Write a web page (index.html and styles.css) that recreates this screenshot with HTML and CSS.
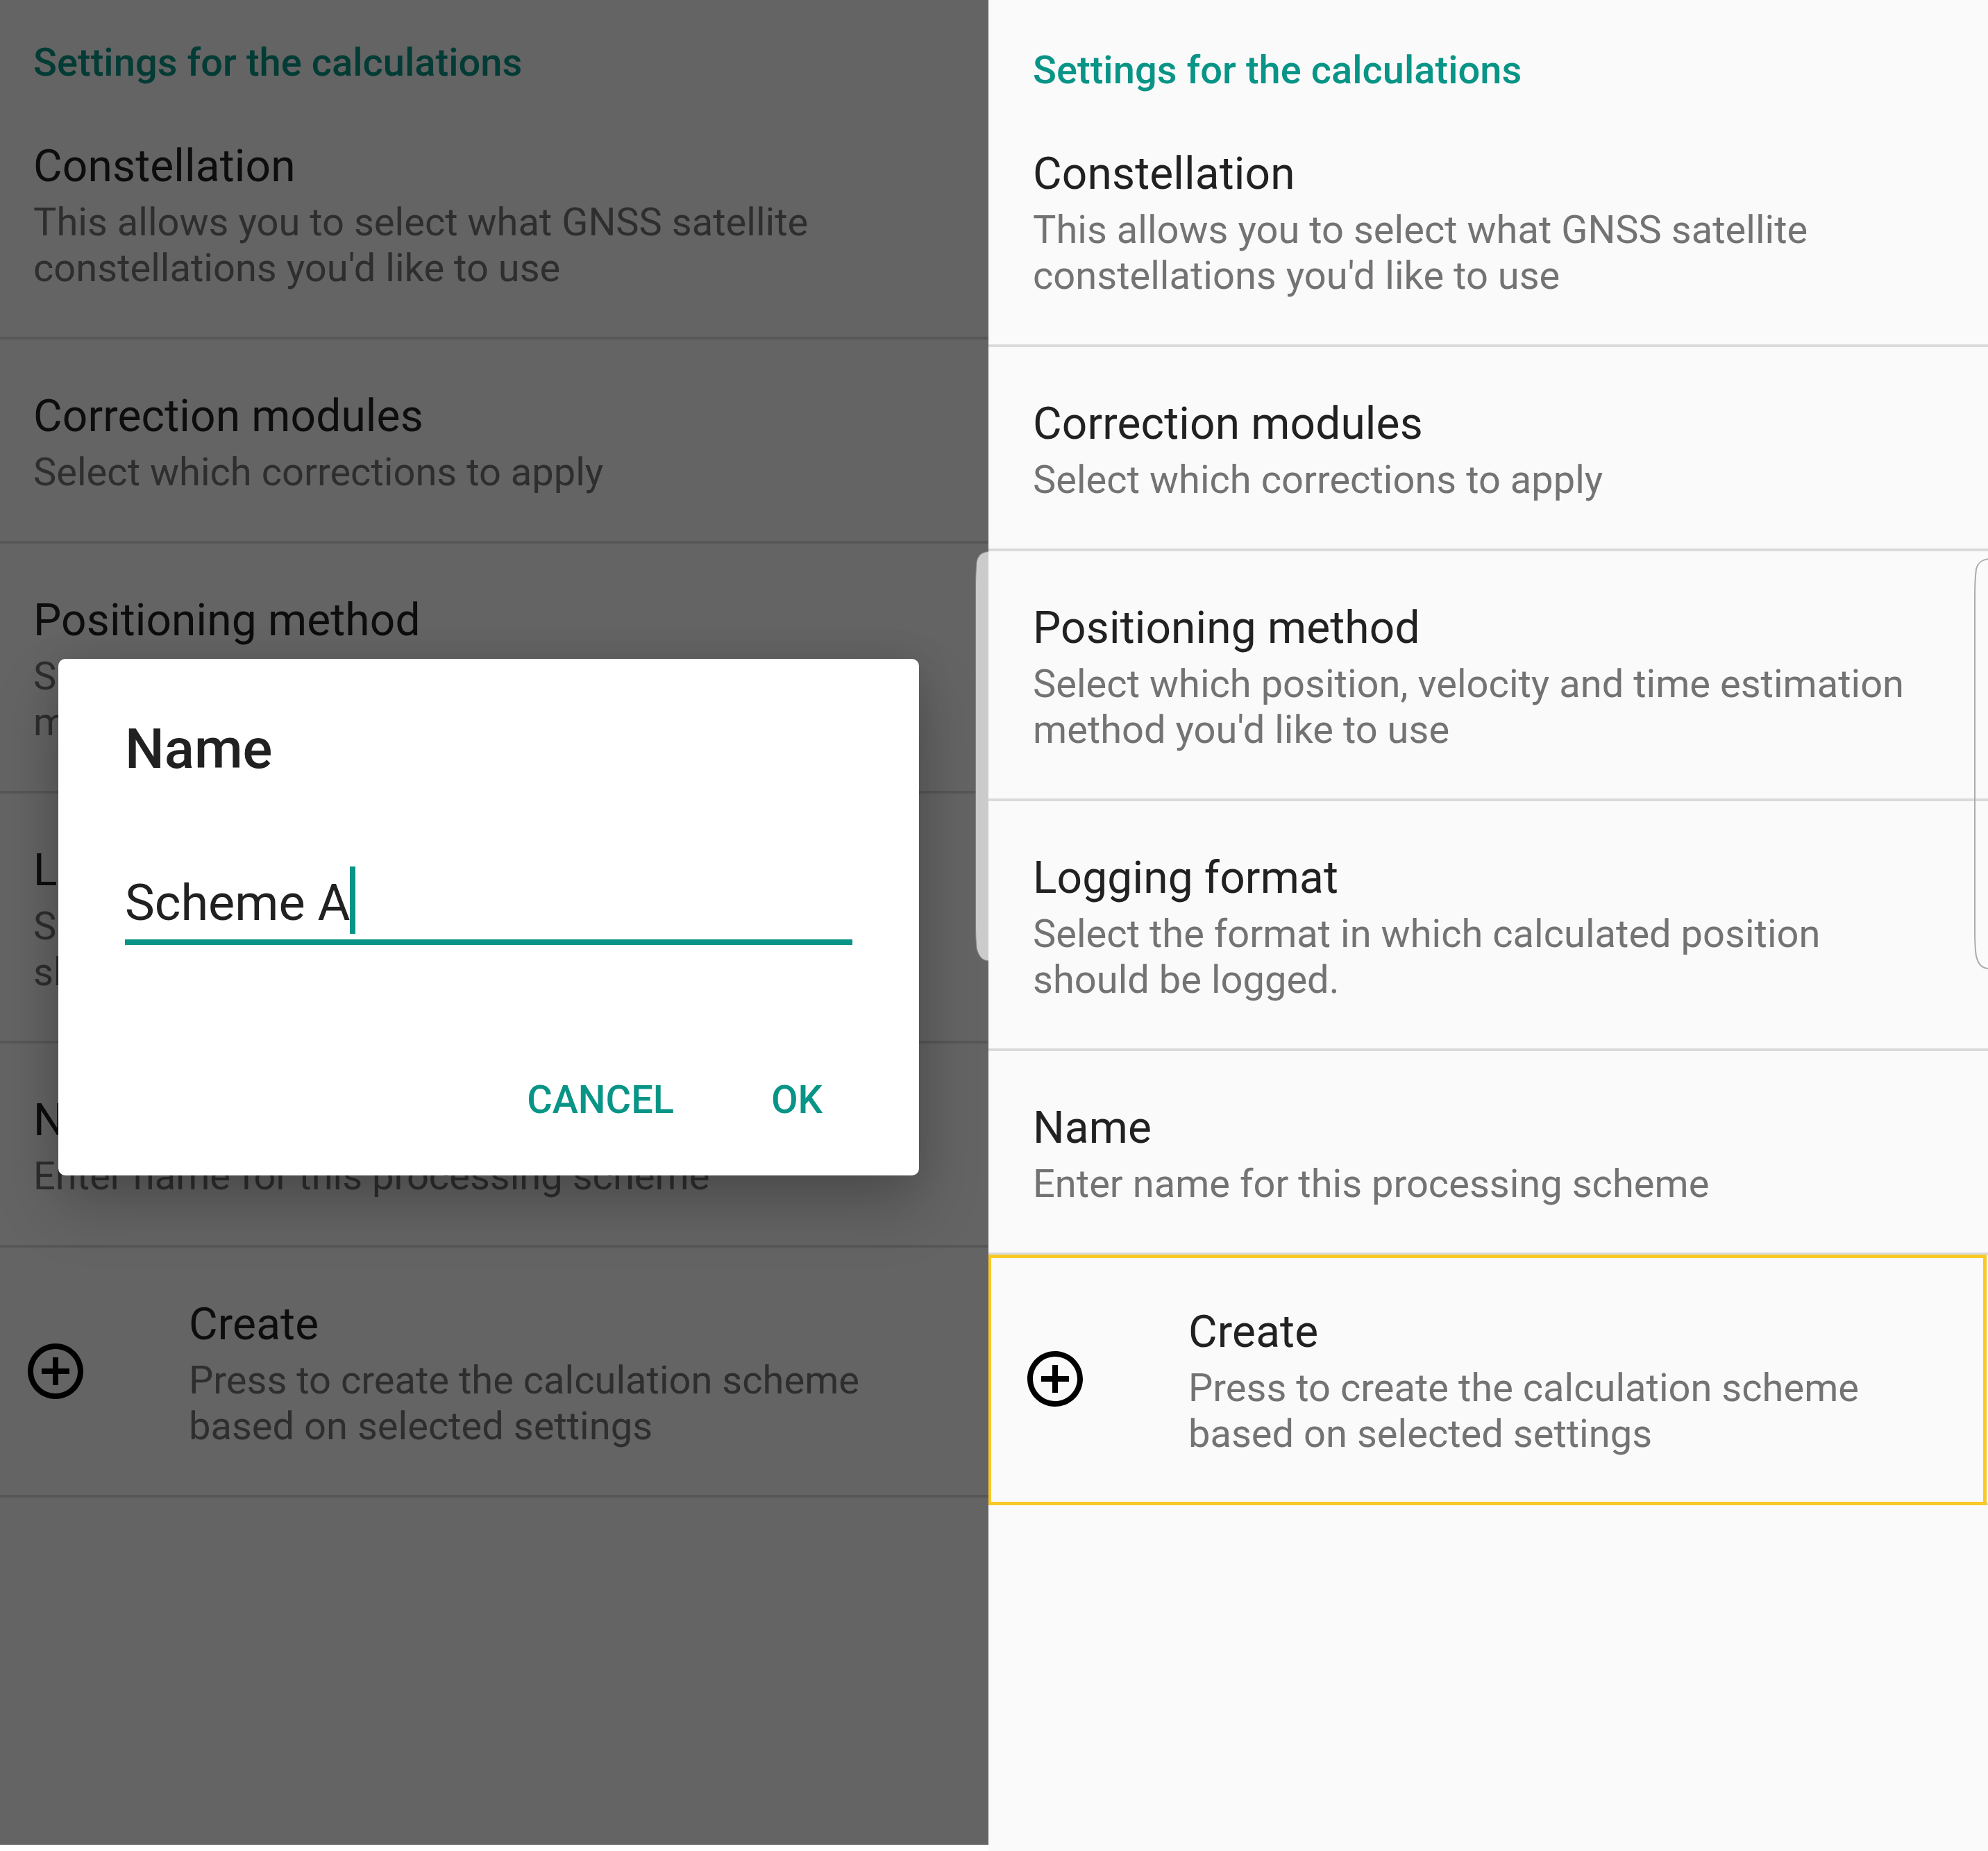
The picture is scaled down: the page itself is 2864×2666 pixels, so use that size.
FILE: index.html
```html
<!DOCTYPE html>
<html lang="en">
<head>
<meta charset="utf-8">
<title>Settings for the calculations</title>
<link rel="stylesheet" href="styles.css">
</head>
<body>
<main class="screens">
  <section class="screen screen-dimmed">
    <h2 class="category">Settings for the calculations</h2>
    <div class="item item-first"><div class="text"><h3 class="title">Constellation</h3><p class="summary">This allows you to select what GNSS satellite<br>constellations you'd like to use</p></div></div>
    <div class="item"><div class="text"><h3 class="title">Correction modules</h3><p class="summary">Select which corrections to apply</p></div></div>
    <div class="item"><div class="text"><h3 class="title">Positioning method</h3><p class="summary">Select which position, velocity and time estimation<br>method you'd like to use</p></div></div>
    <div class="item"><div class="text"><h3 class="title">Logging format</h3><p class="summary">Select the format in which calculated position<br>should be logged.</p></div></div>
    <div class="item"><div class="text"><h3 class="title">Name</h3><p class="summary">Enter name for this processing scheme</p></div></div>
    <div class="item">
      <svg class="icon" viewBox="0 0 24 24"><path d="M13 7h-2v4H7v2h4v4h2v-4h4v-2h-4V7zm-1-5C6.48 2 2 6.48 2 12s4.48 10 10 10 10-4.48 10-10S17.52 2 12 2zm0 18c-4.41 0-8-3.59-8-8s3.59-8 8-8 8 3.59 8 8-3.59 8-8 8z"/></svg>
      <div class="text"><h3 class="title">Create</h3><p class="summary">Press to create the calculation scheme<br>based on selected settings</p></div>
    </div>
    <div class="scrim">
      <div class="dialog">
        <h2 class="dialog-title">Name</h2>
        <div class="field"><span class="value">Scheme A</span><span class="caret"></span></div>
        <div class="actions"><span class="action">CANCEL</span><span class="action">OK</span></div>
      </div>
      <svg class="edge edge-filled" viewBox="0 0 22 594"><path d="M23 2.500C12.500 2.500 7 8 5 17C4 28 3.500 40 3.500 60V534C3.500 554 4 565 5 574C8 586 13.500 592 23 592Z"/></svg>
    </div>
  </section>
  <section class="screen screen-plain">
    <h2 class="category">Settings for the calculations</h2>
    <div class="item item-first"><div class="text"><h3 class="title">Constellation</h3><p class="summary">This allows you to select what GNSS satellite<br>constellations you'd like to use</p></div></div>
    <div class="item"><div class="text"><h3 class="title">Correction modules</h3><p class="summary">Select which corrections to apply</p></div></div>
    <div class="item"><div class="text"><h3 class="title">Positioning method</h3><p class="summary">Select which position, velocity and time estimation<br>method you'd like to use</p></div></div>
    <div class="item"><div class="text"><h3 class="title">Logging format</h3><p class="summary">Select the format in which calculated position<br>should be logged.</p></div></div>
    <div class="item"><div class="text"><h3 class="title">Name</h3><p class="summary">Enter name for this processing scheme</p></div></div>
    <div class="item item-marked">
      <svg class="icon" viewBox="0 0 24 24"><path d="M13 7h-2v4H7v2h4v4h2v-4h4v-2h-4V7zm-1-5C6.48 2 2 6.48 2 12s4.48 10 10 10 10-4.48 10-10S17.52 2 12 2zm0 18c-4.41 0-8-3.59-8-8s3.59-8 8-8 8 3.59 8 8-3.59 8-8 8z"/></svg>
      <div class="text"><h3 class="title">Create</h3><p class="summary">Press to create the calculation scheme<br>based on selected settings</p></div>
    </div>
    <svg class="edge edge-outline" viewBox="0 0 22 594"><path d="M24 2C12 3 7 8 5 17C3.500 28 3 40 3 60V534C3 554 3.500 565 5 574C8 586 13 592 24 592"/></svg>
  </section>
</main>
</body>
</html>
```
FILE: styles.css
```css
* { box-sizing: border-box; }

body {
  margin: 0;
  background: #fff;
  font-family: Roboto, "Liberation Sans", sans-serif;
}

h2, h3, p { margin: 0; }

.screens {
  display: grid;
  grid-template-columns: 1424px 1440px;
  align-items: start;
  width: 2864px;
  height: 2666px;
}

.screen {
  position: relative;
  overflow: hidden;
  background: #fafafa;
}

.screen-dimmed {
  --inset: 48px;
  height: 2657px;
  padding-top: 57px;
}

.screen-plain {
  --inset: 64px;
  height: 2666px;
  padding-top: 68px;
}

.category {
  padding-left: var(--inset);
  font-size: 56px;
  line-height: 66px;
  font-weight: 500;
  letter-spacing: 0.04px;
  color: #089486;
}

.item {
  position: relative;
  display: flex;
  align-items: center;
  padding: 73px 0 66px var(--inset);
  border-bottom: 4px solid #dadada;
}

.item-first { padding-top: 79px; }

.title {
  margin-bottom: 10px;
  font-size: 64px;
  line-height: 75px;
  font-weight: 400;
  letter-spacing: 0.15px;
  color: #212121;
}

.summary {
  font-size: 56px;
  line-height: 66px;
  letter-spacing: 0.02px;
  color: #737373;
  white-space: nowrap;
}

.icon {
  flex: none;
  width: 96px;
  height: 96px;
  margin: 0 144px 7px -16px;
}

/* highlight frame drawn over the row */
.item-marked::after {
  content: "";
  position: absolute;
  inset: -1px 2px -4px 0;
  border: 5px solid #f9ca26;
  border-left-width: 4px;
}

.scrim {
  position: absolute;
  inset: 0;
  padding: 949px 100px 0 84px;
  background: rgba(0, 0, 0, 0.6);
}

.dialog {
  height: 744px;
  padding: 83px 96px 0;
  border-radius: 10px;
  background: #fff;
  box-shadow: 0 44px 90px rgba(0, 0, 0, 0.21), 0 0 50px rgba(0, 0, 0, 0.1);
}

.dialog-title {
  font-size: 80px;
  line-height: 94px;
  font-weight: 500;
  color: #212121;
}

.field {
  display: flex;
  align-items: flex-start;
  height: 113px;
  margin-top: 122px;
  border-bottom: 8px solid #089486;
}

.value {
  padding-top: 11px;
  font-size: 72px;
  line-height: 84px;
  color: #212121;
}

.caret {
  width: 8px;
  height: 97px;
  background: #089486;
}

.actions {
  display: flex;
  justify-content: flex-end;
  gap: 140px;
  margin-top: 190px;
  padding-right: 43px;
}

.action {
  font-size: 56px;
  line-height: 66px;
  font-weight: 500;
  color: #089486;
}

.edge {
  position: absolute;
  width: 22px;
  height: 594px;
}

.edge-filled {
  right: 0;
  top: 792px;
  fill: #cbcbcb;
  stroke: #808080;
  stroke-width: 1;
}

.edge-outline {
  right: 0;
  top: 803px;
  fill: none;
  stroke: #acacac;
  stroke-width: 2;
}
```
